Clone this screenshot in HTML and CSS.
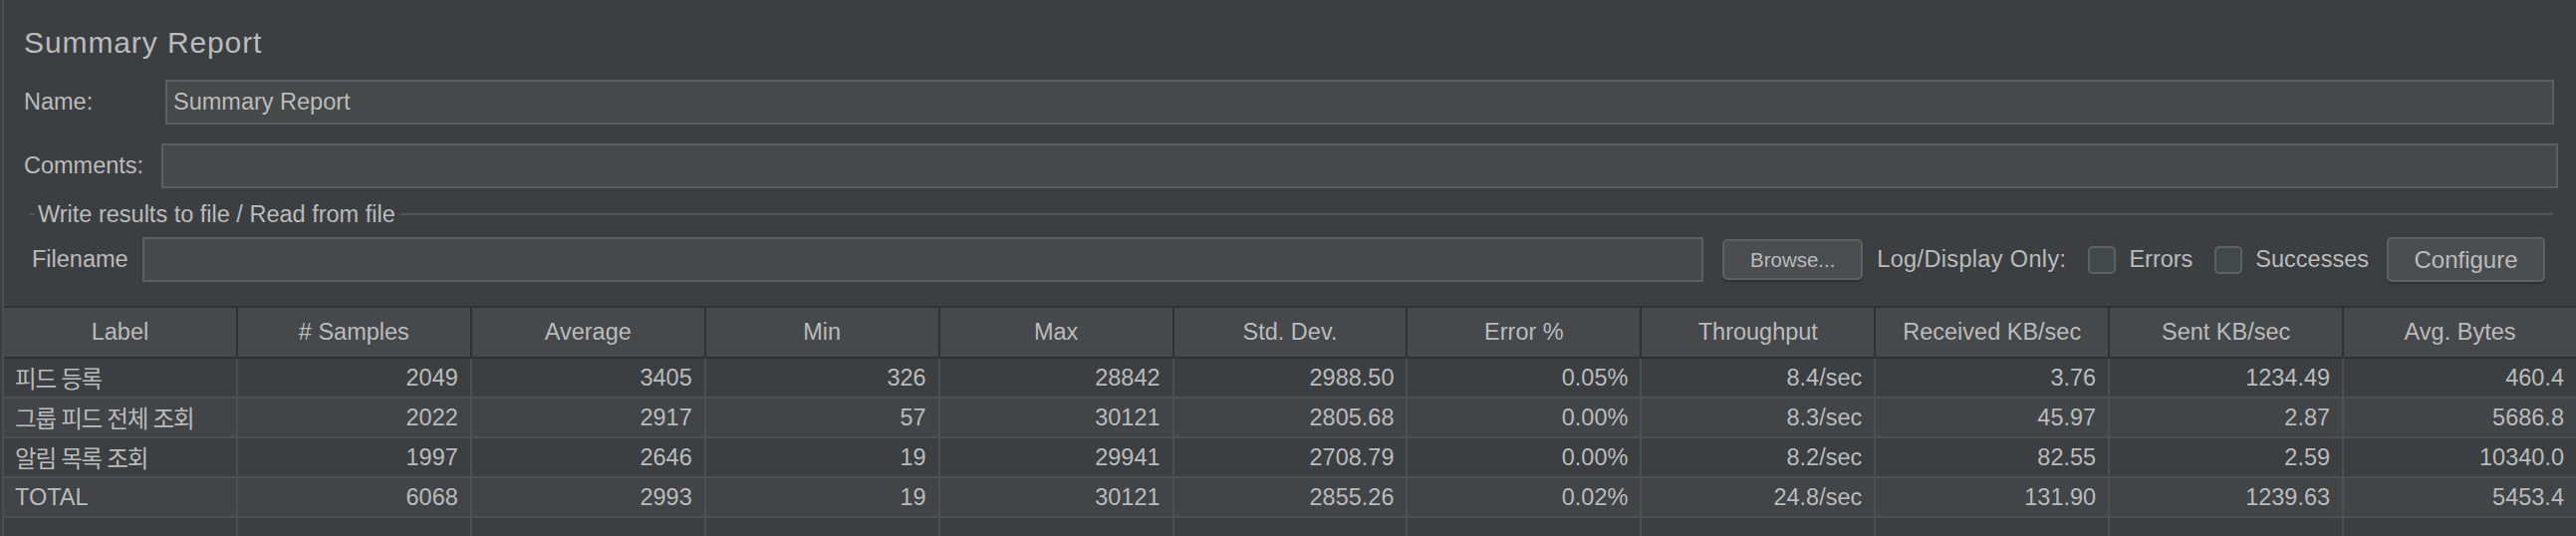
FILE: index.html
```html
<!DOCTYPE html>
<html lang="ko">
<head>
<meta charset="utf-8">
<title>Summary Report</title>
<link rel="stylesheet" href="styles.css">
</head>
<body>
<div class="frame">
  <h1 class="title">Summary Report</h1>
  <div class="row row-name">
    <span class="lbl lbl-name">Name:</span>
    <div class="field">Summary Report</div>
  </div>
  <div class="row row-comments">
    <span class="lbl lbl-comments">Comments:</span>
    <div class="field"></div>
  </div>
  <div class="group-title">
    <span class="dash"></span>
    <span class="gt-text">Write results to file / Read from file</span>
    <span class="gt-line"></span>
  </div>
  <div class="row row-file">
    <span class="lbl lbl-file">Filename</span>
    <div class="field field-file"></div>
    <button class="btn btn-browse">Browse...</button>
    <span class="log-label">Log/Display Only:</span>
    <span class="checkbox"></span><span class="cb-label">Errors</span>
    <span class="checkbox"></span><span class="cb-label">Successes</span>
    <button class="btn btn-config">Configure</button>
  </div>
  <div class="table">
    <div class="thead">
      <div class="th">Label</div>
      <div class="th"># Samples</div>
      <div class="th">Average</div>
      <div class="th">Min</div>
      <div class="th">Max</div>
      <div class="th">Std. Dev.</div>
      <div class="th">Error %</div>
      <div class="th">Throughput</div>
      <div class="th">Received KB/sec</div>
      <div class="th">Sent KB/sec</div>
      <div class="th">Avg. Bytes</div>
    </div>
    <div class="tr odd">
      <div class="td l ko">피드 등록</div>
      <div class="td">2049</div>
      <div class="td">3405</div>
      <div class="td">326</div>
      <div class="td">28842</div>
      <div class="td">2988.50</div>
      <div class="td">0.05%</div>
      <div class="td">8.4/sec</div>
      <div class="td">3.76</div>
      <div class="td">1234.49</div>
      <div class="td">460.4</div>
    </div>
    <div class="tr even">
      <div class="td l ko">그룹 피드 전체 조회</div>
      <div class="td">2022</div>
      <div class="td">2917</div>
      <div class="td">57</div>
      <div class="td">30121</div>
      <div class="td">2805.68</div>
      <div class="td">0.00%</div>
      <div class="td">8.3/sec</div>
      <div class="td">45.97</div>
      <div class="td">2.87</div>
      <div class="td">5686.8</div>
    </div>
    <div class="tr odd">
      <div class="td l ko">알림 목록 조회</div>
      <div class="td">1997</div>
      <div class="td">2646</div>
      <div class="td">19</div>
      <div class="td">29941</div>
      <div class="td">2708.79</div>
      <div class="td">0.00%</div>
      <div class="td">8.2/sec</div>
      <div class="td">82.55</div>
      <div class="td">2.59</div>
      <div class="td">10340.0</div>
    </div>
    <div class="tr even">
      <div class="td l">TOTAL</div>
      <div class="td">6068</div>
      <div class="td">2993</div>
      <div class="td">19</div>
      <div class="td">30121</div>
      <div class="td">2855.26</div>
      <div class="td">0.02%</div>
      <div class="td">24.8/sec</div>
      <div class="td">131.90</div>
      <div class="td">1239.63</div>
      <div class="td">5453.4</div>
    </div>
    <div class="tr odd">
      <div class="td l"></div>
      <div class="td"></div>
      <div class="td"></div>
      <div class="td"></div>
      <div class="td"></div>
      <div class="td"></div>
      <div class="td"></div>
      <div class="td"></div>
      <div class="td"></div>
      <div class="td"></div>
      <div class="td"></div>
    </div>
  </div>
</div>
</body>
</html>
```
FILE: styles.css
```css
html, body {
  margin: 0;
  padding: 0;
  background: #3c3f41;
  height: 100%;
  overflow: hidden;
}

body {
  font-family: "Liberation Sans", "Noto Sans CJK KR", sans-serif;
  font-size: 23.5px;
  color: #bbbbbb;
}

.frame {
  margin-left: 2px;
  border-left: 2px solid #4b4e51;
  min-height: 538px;
  box-sizing: border-box;
}

.title {
  margin: 0;
  padding: 25px 0 0 20px;
  font-size: 30px;
  font-weight: normal;
  line-height: 36px;
  letter-spacing: 0.9px;
}

.row {
  display: flex;
  align-items: center;
  height: 45px;
  box-sizing: border-box;
}

.row-name {
  margin-top: 19px;
  padding: 0 22px 0 20px;
}

.row-comments {
  margin-top: 19px;
  padding: 0 18px 0 20px;
}

.lbl {
  flex: none;
  white-space: nowrap;
}

.lbl-name { width: 142px; }
.lbl-comments { width: 138px; }

.field {
  flex: 1;
  height: 45px;
  box-sizing: border-box;
  background: #45494a;
  border: 2px solid #5c5f61;
  padding-left: 6px;
  display: flex;
  align-items: center;
  white-space: nowrap;
}

.group-title {
  margin-top: 14px;
  height: 24px;
  display: flex;
  align-items: center;
  padding: 0 23px 0 25px;
}

.dash {
  width: 6px;
  height: 2px;
  background: #525557;
  margin-right: 3px;
  flex: none;
}

.gt-text {
  white-space: nowrap;
  flex: none;
}

.gt-line {
  flex: 1;
  height: 2px;
  background: #525557;
  margin-left: 4px;
}

.row-file {
  margin-top: 11px;
  padding: 0 31px 0 28px;
}

.lbl-file {
  margin-right: 14px;
}

.btn {
  flex: none;
  font-family: inherit;
  color: #bbbbbb;
  background: #4a4e50;
  border: 2px solid #5e6163;
  border-radius: 5px;
  box-shadow: 0 2px 2px rgba(0, 0, 0, 0.25);
  padding: 0;
  box-sizing: border-box;
  display: flex;
  align-items: center;
  justify-content: center;
}

.btn-browse {
  margin-left: 19px;
  width: 141px;
  height: 41px;
  font-size: 20.5px;
}

.log-label {
  margin-left: 14px;
  white-space: nowrap;
  flex: none;
  letter-spacing: 0.35px;
}

.checkbox {
  flex: none;
  width: 28px;
  height: 28px;
  box-sizing: border-box;
  margin-left: 22px;
  background: #43494a;
  border: 2px solid #5e6163;
  border-radius: 5px;
}

.cb-label {
  margin-left: 13px;
  white-space: nowrap;
  flex: none;
}

.btn-config {
  margin-left: 18px;
  width: 159px;
  height: 45px;
  font-size: 24px;
}

.table {
  margin-top: 24px;
}

.thead {
  display: grid;
  grid-template-columns: repeat(11, 1fr);
  column-gap: 2px;
  background: #2f3133;
  padding: 2px 0;
}

.th {
  background: #46494b;
  height: 49px;
  display: flex;
  align-items: center;
  justify-content: center;
  white-space: nowrap;
}

.tr {
  display: grid;
  grid-template-columns: repeat(11, 1fr);
  column-gap: 2px;
  background: #4d5052;
  padding-bottom: 2px;
}

.td {
  height: 38px;
  display: flex;
  align-items: center;
  justify-content: flex-end;
  padding: 0 12px;
  white-space: nowrap;
  overflow: hidden;
}

.td.l {
  justify-content: flex-start;
  padding-left: 11px;
}

.td.ko {
  letter-spacing: -1.2px;
}

.odd .td { background: #3c3f41; }
.even .td { background: #414548; }
```
